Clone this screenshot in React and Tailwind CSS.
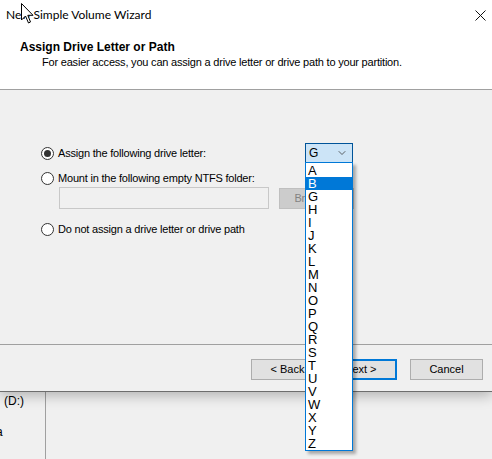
import { ChevronDown } from 'lucide-react';

const letters = ['A', 'B', 'G', 'H', 'I', 'J', 'K', 'L', 'M', 'N', 'O', 'P', 'Q', 'R', 'S', 'T', 'U', 'V', 'W', 'X', 'Y', 'Z'];

function Radio({ checked }) {
    return (
        <span className="w-[13px] h-[13px] rounded-full border border-[#333] bg-white flex items-center justify-center shrink-0">
            {checked && <span className="w-[7px] h-[7px] rounded-full bg-[#333]" />}
        </span>
    );
}

function Btn({ children, primary }) {
    return (
        <div className={`w-[73px] h-[21px] flex items-center justify-center bg-[#e1e1e1] text-[11px] text-black ${primary ? 'border-2 border-[#0078d7]' : 'border border-[#adadad]'}`}>
            {children}
        </div>
    );
}

export default function App() {
    return (
        <div className="relative w-[492px] h-[459px] overflow-hidden bg-[#f0f0f0] flex flex-col" style={{ fontFamily: '"Liberation Sans", Arial, sans-serif' }}>
            {/* dialog */}
            <div className="flex flex-col bg-[#f0f0f0] border-b border-[#6d6d6d] shadow-[0_4px_12px_rgba(0,0,0,0.25)] z-10">
                <div className="h-[30px] bg-white flex items-center justify-between pl-[6px] pr-[6px]">
                    <span className="text-[12px] text-black font-['Lato',sans-serif]">New Simple Volume Wizard</span>
                    <svg className="w-[11px] h-[11px]" viewBox="0 0 11 11" fill="none" stroke="#111" strokeWidth="1"><path d="M0.5 0.5l10 10M10.5 0.5l-10 10" /></svg>
                </div>
                <div className="h-[60px] bg-white pt-[9px] border-b border-[#a0a0a0]">
                    <div className="pl-[20px] text-[12px] font-bold leading-[16px] text-black">Assign Drive Letter or Path</div>
                    <div className="pl-[42px] text-[11px] tracking-[-0.2px] leading-[15px] text-black">For easier access, you can assign a drive letter or drive path to your partition.</div>
                </div>
                <div className="h-[255px] pt-[55px] pl-[41px] flex flex-col border-b border-[#a0a0a0] tracking-[-0.2px]">
                    <div className="flex items-center h-[16px]">
                        <div className="flex items-center gap-[4px] w-[264px]">
                            <Radio checked />
                            <span className="text-[11px] text-black">Assign the following drive letter:</span>
                        </div>
                        <div className="w-[48px] h-[21px] bg-[#cce4f7] border border-[#005499] flex items-center justify-between pl-[3px] pr-[4px]">
                            <span className="text-[12px] text-black">G</span>
                            <ChevronDown className="w-[12px] h-[12px] text-[#333]" strokeWidth={1.5} />
                        </div>
                    </div>
                    <div className="flex items-center gap-[4px] h-[16px] mt-[9px]">
                        <Radio />
                        <span className="text-[11px] text-black">Mount in the following empty NTFS folder:</span>
                    </div>
                    <div className="flex items-center gap-[10px] ml-[18px] mt-[1px]">
                        <div className="w-[210px] h-[22px] border border-[#c8c8c8] bg-[#f0f0f0]" />
                        <div className="w-[75px] h-[21px] bg-[#cccccc] border border-[#bfbfbf] flex items-center justify-center text-[11px] text-[#838383]">Browse...</div>
                    </div>
                    <div className="flex items-center gap-[4px] h-[16px] mt-[12px]">
                        <Radio />
                        <span className="text-[11px] text-black">Do not assign a drive letter or drive path</span>
                    </div>
                </div>
                <div className="h-[46px] flex items-start pt-[14px] pl-[251px]">
                    <Btn>&lt; Back</Btn>
                    <Btn primary>Next &gt;</Btn>
                    <div className="ml-[13px]"><Btn>Cancel</Btn></div>
                </div>
            </div>
            {/* window behind */}
            <div className="flex-1 flex">
                <div className="w-[46px] border-r border-[#a0a0a0] relative text-[12px] text-black">
                    <span className="absolute left-[4px] top-[0px]">(D:)</span>
                    <span className="absolute left-[-4px] top-[31px]">a</span>
                </div>
            </div>
            {/* open dropdown list */}
            <div className="absolute left-[305px] top-[162px] w-[48px] h-[289px] bg-white border border-[#0078d7] shadow-[3px_3px_3px_rgba(0,0,0,0.3)] z-20 flex flex-col pt-[1px]">
                {letters.map(l => (
                    <div key={l} className={`h-[13px] leading-[13px] text-[13px] pl-[2px] ${l === 'B' ? 'bg-[#0078d7] text-white' : 'text-black'}`}>{l}</div>
                ))}
            </div>
            {/* mouse cursor */}
            <svg className="absolute left-[21px] top-[3px] z-30" width="13" height="21" viewBox="0 0 13 21">
                <path d="M0.5 0.5 L0.5 17 L4.5 13 L7.5 20 L9.5 19 L6.8 12.3 L12 12.3 Z" fill="white" stroke="black" strokeWidth="1" strokeLinejoin="miter" />
            </svg>
        </div>
    );
}
